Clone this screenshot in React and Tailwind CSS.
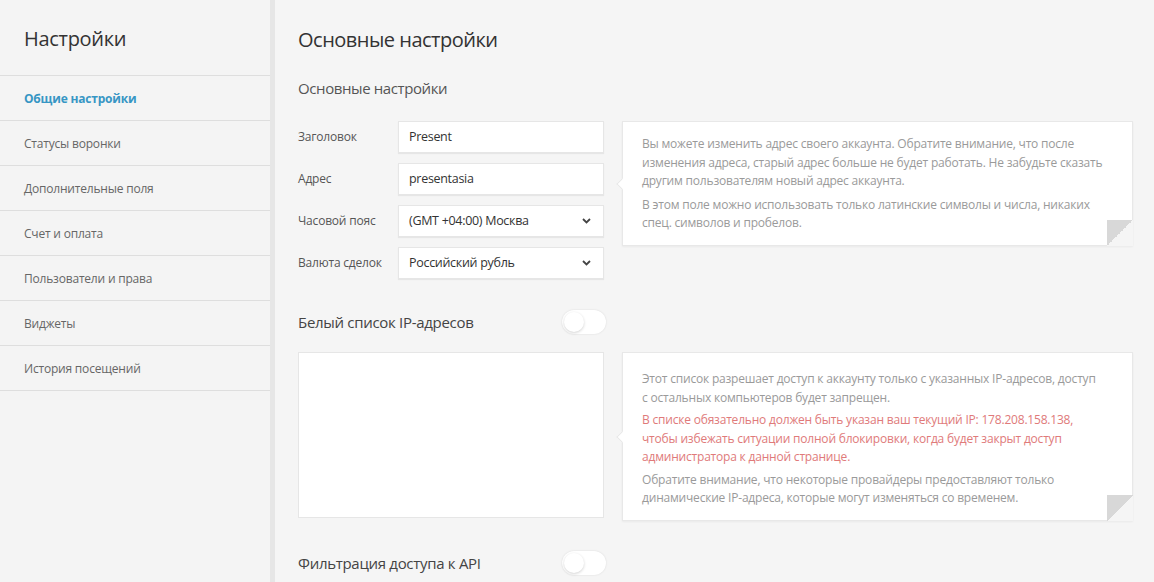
import React from 'react';

const menu = [
    'Общие настройки',
    'Статусы воронки',
    'Дополнительные поля',
    'Счет и оплата',
    'Пользователи и права',
    'Виджеты',
    'История посещений',
];

function Toggle() {
    return (
        <div className="w-[44px] h-[24px] rounded-full bg-white shadow-[0_0_2px_rgba(0,0,0,0.12)] flex items-center px-[2px]">
            <div className="w-[20px] h-[20px] rounded-full bg-white shadow-[0_1px_3px_rgba(0,0,0,0.18)]" />
        </div>
    );
}

function Chevron() {
    return (
        <svg width="9" height="6" viewBox="0 0 9 6" className="text-[#444]">
            <path d="M1 1l3.5 3.5L8 1" fill="none" stroke="currentColor" strokeWidth="1.8" />
        </svg>
    );
}

// Note card with a small arrow on the left and a folded bottom-right corner
function Note({ children, className }) {
    return (
        <div className={`relative bg-white border border-[#e8e8e8] shadow-[0_1px_2px_rgba(0,0,0,0.05)] pl-[19px] pr-[26px] text-[12px] leading-[18.5px] tracking-[-0.2px] text-[#9a9a9a] ${className}`}>
            <div className="absolute -left-[5px] top-1/2 -translate-y-1/2 w-[8px] h-[8px] bg-white border-l border-b border-[#e8e8e8] rotate-45" />
            <div className="absolute right-[-1px] bottom-[-1px] w-[26px] h-[26px] bg-[linear-gradient(135deg,#d8d8d8_50%,#f5f5f5_50%)]" />
            {children}
        </div>
    );
}

function Field({ label, value, select }) {
    return (
        <div className="flex items-center h-8">
            <div className="w-[100px] text-[12px] tracking-[-0.2px] text-[#555]">{label}</div>
            <div className="flex-1 h-8 bg-white border border-[#e6e6e6] shadow-[0_1px_1px_rgba(0,0,0,0.06)] flex items-center justify-between pl-[10px] pr-[12px] text-[12.5px] tracking-[-0.3px] text-[#333]">
                <span>{value}</span>
                {select && <Chevron />}
            </div>
        </div>
    );
}

export default function App() {
    return (
        <div className="h-[582px] w-[1154px] overflow-hidden flex bg-[#f5f5f5] font-['Open_Sans',sans-serif]">
            <aside className="w-[270px] shrink-0 bg-[#f4f4f4]">
                <h2 className="h-[76px] flex items-center pl-6 pt-[3px] text-[20px] tracking-[-0.3px] text-[#333] border-b border-[#dedede]">Настройки</h2>
                <ul>
                    {menu.map((item, i) => (
                        <li
                            key={item}
                            className={`h-[45px] flex items-center pl-6 pt-[1px] border-b border-[#dedede] text-[12px] tracking-[-0.2px] ${i === 0 ? 'font-bold text-[#3796c4]' : 'text-[#666]'}`}
                        >
                            {item}
                        </li>
                    ))}
                </ul>
            </aside>
            <div className="w-[5px] shrink-0 bg-[#e6e6e6]" />

            <main className="flex-1 pl-[23px] pr-[21px]">
                <h1 className="h-[80px] flex items-center text-[20px] tracking-[-0.5px] text-[#333]">Основные настройки</h1>
                <h3 className="text-[15px] tracking-[-0.4px] text-[#555] leading-[16px]">Основные настройки</h3>

                <div className="flex gap-[18px] mt-[25px]">
                    <div className="w-[306px] flex flex-col gap-[10px]">
                        <Field label="Заголовок" value="Present" />
                        <Field label="Адрес" value="presentasia" />
                        <Field label="Часовой пояс" value="(GMT +04:00) Москва" select />
                        <Field label="Валюта сделок" value="Российский рубль" select />
                    </div>
                    <Note className="flex-1 h-[125px] pt-[13px]">
                        <p>Вы можете изменить адрес своего аккаунта. Обратите внимание, что после изменения адреса, старый адрес больше не будет работать. Не забудьте сказать другим пользователям новый адрес аккаунта.</p>
                        <p className="mt-[5px]">В этом поле можно использовать только латинские символы и числа, никаких спец. символов и пробелов.</p>
                    </Note>
                </div>

                <div className="w-[308px] flex items-center justify-between mt-[31px]">
                    <span className="text-[15px] tracking-[-0.3px] text-[#444]">Белый список IP-адресов</span>
                    <Toggle />
                </div>

                <div className="flex gap-[18px] mt-[18px]">
                    <div className="w-[306px] h-[166px] bg-white border border-[#e6e6e6]" />
                    <Note className="flex-1 h-[169px] pt-[17px]">
                        <p>Этот список разрешает доступ к аккаунту только с указанных IP-адресов, доступ с&nbsp;остальных компьютеров будет запрещен.</p>
                        <p className="mt-[4px] text-[#e07a7a]">В списке обязательно должен быть указан ваш текущий IP: 178.208.158.138, чтобы избежать ситуации полной блокировки, когда будет закрыт доступ администратора к данной странице.</p>
                        <p className="mt-[4px]">Обратите внимание, что некоторые провайдеры предоставляют только динамические IP-адреса, которые могут изменяться со временем.</p>
                    </Note>
                </div>

                <div className="w-[308px] flex items-center justify-between mt-[30px]">
                    <span className="text-[15px] tracking-[-0.3px] text-[#444]">Фильтрация доступа к API</span>
                    <Toggle />
                </div>
            </main>
        </div>
    );
}
